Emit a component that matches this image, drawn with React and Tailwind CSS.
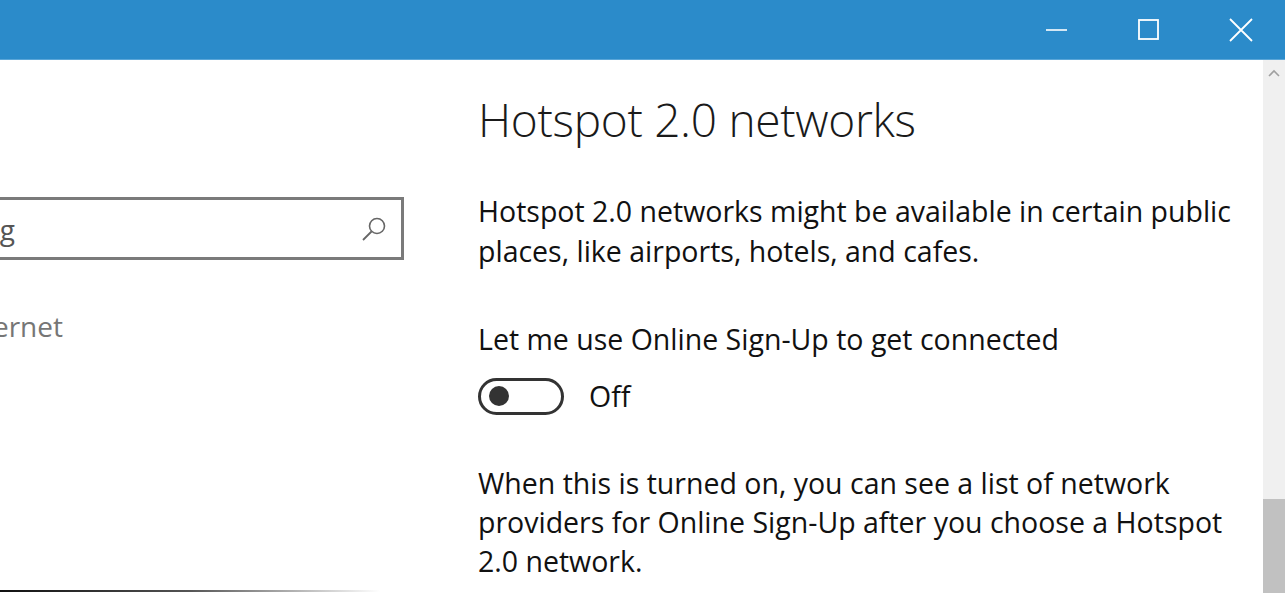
import React from "react";

const font = { fontFamily: '"Open Sans", "Noto Sans", sans-serif' };

const TitleBar = () => (
  <div className="h-[60px] bg-[#2b8bca] border-b border-[#5aa6d8] flex justify-end items-center shrink-0">
    {/* minimize */}
    <div className="w-[92px] h-full flex items-center justify-center">
      <svg width="22" height="22" viewBox="0 0 22 22">
        <line x1="0" y1="11" x2="21" y2="11" stroke="white" strokeWidth="1.6" />
      </svg>
    </div>
    {/* maximize */}
    <div className="w-[92px] h-full flex items-center justify-center">
      <svg width="22" height="22" viewBox="0 0 22 22">
        <rect x="1" y="1" width="19" height="19" fill="none" stroke="white" strokeWidth="1.8" />
      </svg>
    </div>
    {/* close */}
    <div className="w-[92px] h-full flex items-center justify-center mr-[-2px]">
      <svg width="24" height="24" viewBox="0 0 24 24">
        <path d="M1 1 L23 23 M23 1 L1 23" stroke="white" strokeWidth="1.8" />
      </svg>
    </div>
  </div>
);

const Toggle = () => (
  <div className="flex items-center gap-[25px]">
    <div className="w-[86px] h-[37px] rounded-full border-[3px] border-[#333] flex items-center pl-[8px]">
      <div className="w-[20px] h-[20px] rounded-full bg-[#333]" />
    </div>
    <span className="text-[28.5px] text-[#111]">Off</span>
  </div>
);

export default function App() {
  return (
    <div className="w-[1285px] h-[593px] bg-white flex flex-col overflow-hidden" style={font}>
      <TitleBar />

      <div className="flex flex-1 min-h-0">
        {/* left pane (mostly cut off) */}
        <div className="w-[478px] shrink-0 flex flex-col overflow-hidden">
          <div className="mt-[137px] ml-[-250px] w-[654px] h-[63px] border-[3px] border-[#7a7a7a] flex items-center">
            <div className="w-[262px] flex justify-end whitespace-nowrap text-[28px] text-[#555]">
              Find a setting
            </div>
            <div className="ml-auto mr-[14px] text-[#666]">
              <svg width="26" height="26" viewBox="0 0 26 26">
                <circle cx="16" cy="10" r="7.5" fill="none" stroke="#666" strokeWidth="1.6" />
                <line x1="10.5" y1="15.5" x2="2" y2="24" stroke="#666" strokeWidth="1.8" />
              </svg>
            </div>
          </div>
          <div className="mt-[45px] w-[63px] flex justify-end whitespace-nowrap text-[28px] text-[#767676]">
            Network &amp; Internet
          </div>
          <div className="mt-auto mb-[1px] h-[2px] w-[380px] bg-gradient-to-r from-[#111] via-[#555] to-transparent" />
        </div>

        {/* right content */}
        <div className="flex-1 pr-[8px] text-[#111]">
          <h1 className="mt-[29px] text-[46px] font-light leading-[60px] text-[#1a1a1a] tracking-[-0.3px]">
            Hotspot 2.0 networks
          </h1>
          <p className="mt-[42px] text-[28.5px] leading-[40px]">
            Hotspot 2.0 networks might be available in certain public places, like airports, hotels, and cafes.
          </p>
          <p className="mt-[48px] text-[28.5px] leading-[40px]">
            Let me use Online Sign-Up to get connected
          </p>
          <div className="mt-[16px]">
            <Toggle />
          </div>
          <p className="mt-[46px] text-[28.5px] leading-[39px]">
            When this is turned on, you can see a list of network providers for Online Sign-Up after you choose a Hotspot 2.0 network.
          </p>
        </div>

        {/* scrollbar */}
        <div className="w-[22px] shrink-0 bg-[#f0f0f0] flex flex-col items-center">
          <svg className="mt-[9px]" width="12" height="8" viewBox="0 0 12 8">
            <path d="M1 7 L6 2 L11 7" fill="none" stroke="#a0a0a0" strokeWidth="1.6" />
          </svg>
          <div className="mt-auto w-full h-[94px] bg-[#c1c1c1]" />
        </div>
      </div>
    </div>
  );
}
